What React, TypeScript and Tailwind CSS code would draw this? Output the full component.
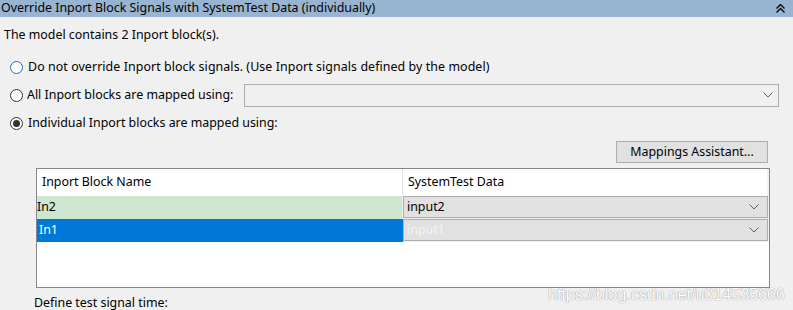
import React from "react";

function Radio({ checked, focused }: { checked?: boolean; focused?: boolean }) {
  return (
    <span
      className={`flex h-[13px] w-[13px] shrink-0 items-center justify-center rounded-full border bg-white ${
        focused ? "border-[#0078d7]" : "border-[#333333]"
      }`}
    >
      {checked && <span className="h-[7px] w-[7px] rounded-full bg-[#333333]" />}
    </span>
  );
}

function Chevron() {
  return (
    <svg width="10" height="6" viewBox="0 0 10 6" className="shrink-0">
      <polyline points="0.5,0.5 5,5 9.5,0.5" fill="none" stroke="#606060" strokeWidth="1" />
    </svg>
  );
}

function CellCombo({ text, light }: { text: string; light?: boolean }) {
  return (
    <div className="flex h-full items-center justify-between border border-[#adadad] bg-[#e1e1e1] pl-[3px] pr-[8px]">
      <span className={light ? "text-[#f4f4f4]" : "text-black"}>{text}</span>
      <Chevron />
    </div>
  );
}

export default function App() {
  return (
    <div
      className="relative h-[310px] w-[793px] overflow-hidden bg-[#f0f0f0] text-[12.4px] text-black"
      style={{ fontFamily: "'Noto Sans', 'Open Sans', sans-serif" }}
    >
      <div className="flex h-[17px] items-center justify-between bg-[#99b4d1] pl-[1px] pr-[8px]">
        <span className="leading-none">Override Inport Block Signals with SystemTest Data (individually)</span>
        <svg width="9" height="9" viewBox="0 0 9 9">
          <polyline points="0.5,4.5 4.5,0.5 8.5,4.5" fill="none" stroke="#000" strokeWidth="1.3" />
          <polyline points="0.5,8.5 4.5,4.5 8.5,8.5" fill="none" stroke="#000" strokeWidth="1.3" />
        </svg>
      </div>

      <div className="flex h-[36px] items-center pl-[4px]">The model contains 2 Inport block(s).</div>

      <div className="flex h-[28px] items-center gap-[5px] pl-[10px]">
        <Radio focused />
        <span className="tracking-[0.08px]">Do not override Inport block signals. (Use Inport signals defined by the model)</span>
      </div>
      <div className="flex h-[28px] items-center pl-[10px]">
        <Radio />
        <span className="ml-[4px] w-[217px] shrink-0">All Inport blocks are mapped using:</span>
        <div className="flex h-[23px] w-[535px] items-center justify-end border border-[#adadad] bg-[#f0f0f0] pr-[5px]">
          <Chevron />
        </div>
      </div>
      <div className="flex h-[28px] items-center gap-[5px] pl-[10px]">
        <Radio checked />
        <span>Individual Inport blocks are mapped using:</span>
      </div>

      <div className="mt-[4px] flex justify-end pr-[25px]">
        <div className="flex h-[22px] w-[152px] items-center justify-center border border-[#adadad] bg-[#e1e1e1]">
          Mappings Assistant...
        </div>
      </div>

      <div className="ml-[36px] mt-[5px] h-[120px] w-[734px] border border-[#828790] bg-white">
        <div className="flex h-[27px]">
          <div className="flex w-[365px] items-center pl-[5px]">Inport Block Name</div>
          <div className="w-px bg-[#e5e5e5]" />
          <div className="flex flex-1 items-center pl-[5px]">SystemTest Data</div>
          <div className="w-[2px] bg-[#f0f0f0]" />
        </div>
        <div className="flex h-[23px]">
          <div className="flex w-[365px] items-center bg-[#cde6d0]">In2</div>
          <div className="flex-1 bg-[#f0f0f0] p-[0px_1px_1px_1px]">
            <CellCombo text="input2" />
          </div>
        </div>
        <div className="flex h-[23px]">
          <div className="flex w-[365px] items-center bg-[#0078d7] pl-[2px] text-white">In1</div>
          <div className="flex-1 border-l border-[#0078d7] bg-[#f0f0f0] p-[0px_1px_1px_0px]">
            <CellCombo text="input1" light />
          </div>
        </div>
      </div>

      <div className="flex h-[27px] items-center pl-[34px] pt-[3px]">Define test signal time:</div>

      <div
        className="absolute left-[548px] top-[283px] text-[16px] text-white"
        style={{
          fontFamily: "'Liberation Sans', Arial, sans-serif",
          textShadow: "0 0 1px #9a9a9a, 0 0 1px #9a9a9a",
        }}
      >
        https://blog.csdn.net/u014535666
      </div>
    </div>
  );
}
